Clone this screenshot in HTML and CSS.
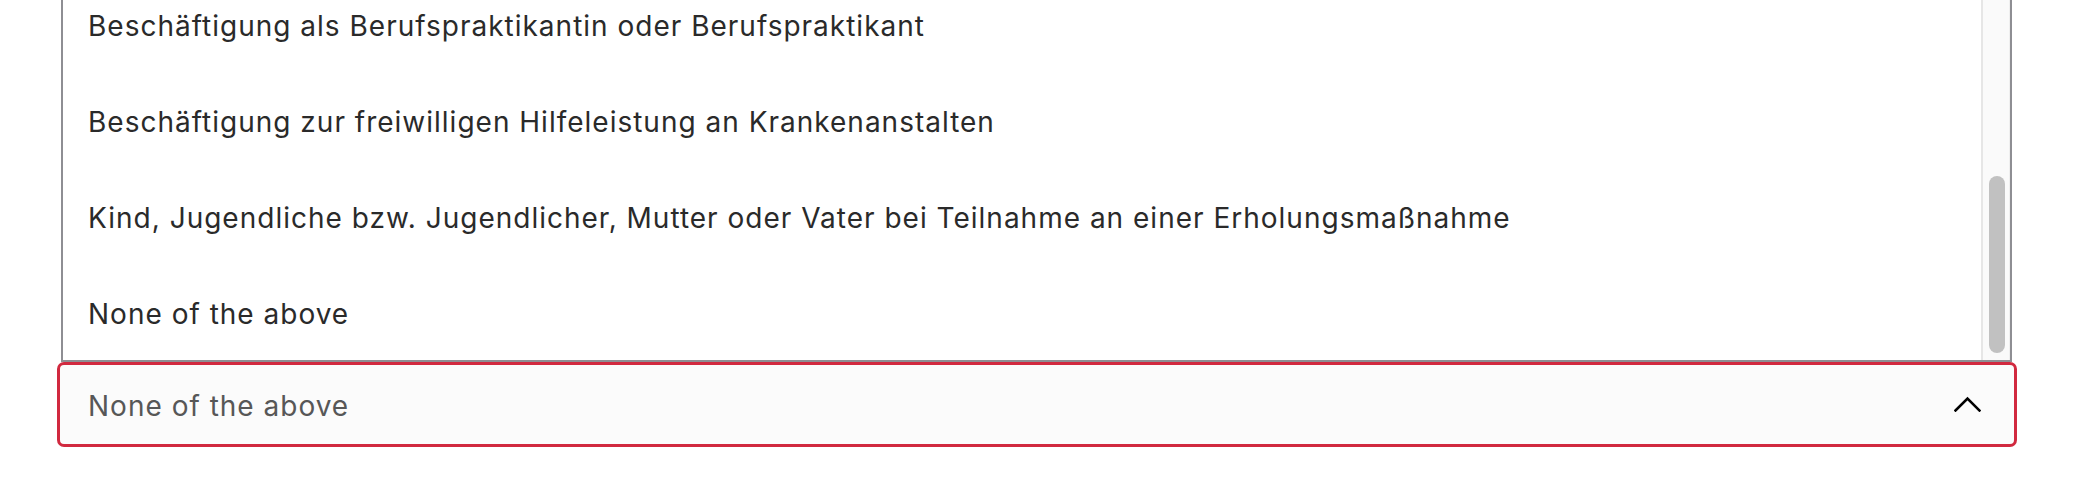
FILE: index.html
```html
<!DOCTYPE html>
<html lang="de">
<head>
<meta charset="utf-8">
<title>Auswahl</title>
<link rel="stylesheet" href="styles.css">
</head>
<body>
<div class="field">
  <div class="listbox">
    <ul class="options">
      <li class="option">Beschäftigung als Berufspraktikantin oder Berufspraktikant</li>
      <li class="option">Beschäftigung zur freiwilligen Hilfeleistung an Krankenanstalten</li>
      <li class="option">Kind, Jugendliche bzw. Jugendlicher, Mutter oder Vater bei Teilnahme an einer Erholungsmaßnahme</li>
      <li class="option">None of the above</li>
    </ul>
    <div class="track"><div class="thumb"></div></div>
  </div>
  <div class="select">
    <span class="value">None of the above</span>
    <svg class="chevron" width="27" height="16" viewBox="0 0 27 16" aria-hidden="true">
      <polyline points="1.5,14.5 13.5,2.5 25.5,14.5" fill="none" stroke="#000" stroke-width="2.6" stroke-linecap="square"/>
    </svg>
  </div>
</div>
</body>
</html>
```
FILE: styles.css
```css
* { box-sizing: border-box; }
html, body {
  margin: 0;
  padding: 0;
  background: #ffffff;
  font-family: Inter, "Noto Sans", "Liberation Sans", sans-serif;
}
.field {
  margin-left: 57px;
  width: 1960px;
}
.listbox {
  display: flex;
  height: 362px;
  margin: 0 5px 0 4px;
  border-left: 2px solid #8e8e93;
  border-right: 2px solid #8e8e93;
  border-bottom: 2px solid #8e8e93;
  background: #ffffff;
  overflow: hidden;
}
.options {
  flex: 1;
  list-style: none;
  margin: -23px 0 0 0;
  padding: 0;
}
.option {
  height: 96px;
  display: flex;
  align-items: center;
  padding: 2px 0 0 25px;
  font-size: 28px;
  letter-spacing: 1px;
  color: #2a2a2a;
  white-space: nowrap;
}
.track {
  width: 29px;
  flex: none;
  background: #fafafa;
  border-left: 2px solid #e6e6e6;
  border-right: 1px solid #efefef;
  padding-top: 176px;
  padding-left: 6px;
}
.thumb {
  width: 16px;
  height: 177px;
  border-radius: 8px;
  background: #c1c1c1;
}
.select {
  display: flex;
  align-items: center;
  justify-content: space-between;
  height: 85px;
  border: 3px solid #d1293f;
  border-radius: 7px;
  background: #fbfbfb;
  padding: 0 33px 0 28px;
}
.value {
  font-size: 28px;
  letter-spacing: 1px;
  color: #575757;
  padding-top: 2px;
}
.chevron {
  display: block;
  margin-top: -2px;
}
```
